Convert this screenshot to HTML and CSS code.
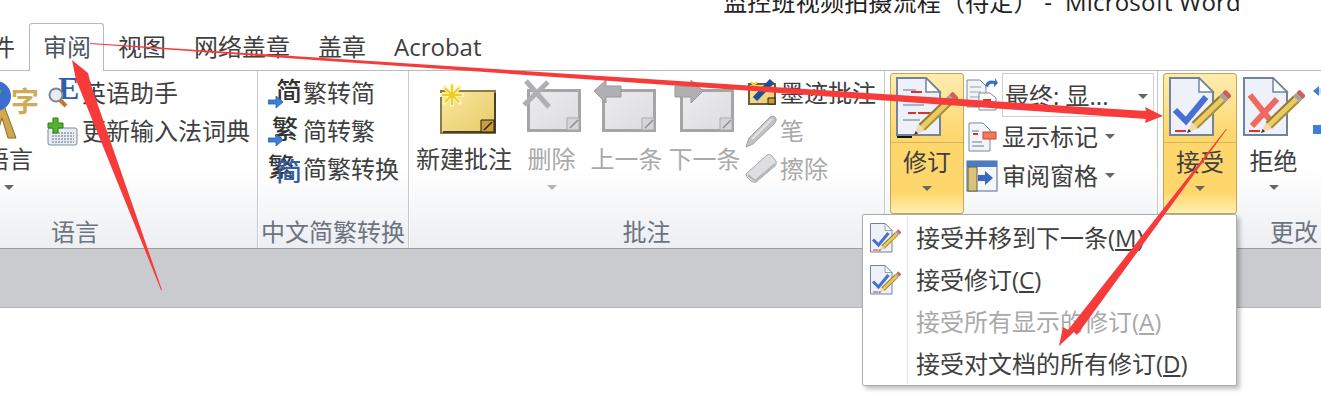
FILE: index.html
```html
<!DOCTYPE html>
<html lang="zh-CN">
<head>
  <meta charset="UTF-8">
  <title>Microsoft Word - 审阅</title>
  <link rel="stylesheet" href="styles.css">
</head>
<body>
  <!-- shared icons -->
  <svg class="defs" width="0" height="0">
    <defs>
      <linearGradient id="goldNote" x1="0" y1="0" x2="1" y2="1">
        <stop offset="0" stop-color="#f9e9a0"/>
        <stop offset="1" stop-color="#e8c968"/>
      </linearGradient>
      <linearGradient id="grayNote" x1="0" y1="0" x2="1" y2="1">
        <stop offset="0" stop-color="#ecebee"/>
        <stop offset="1" stop-color="#dcdbdf"/>
      </linearGradient>
      <g id="pencil">
        <polygon points="0,0 11,-4.5 11,4.5" fill="#f3d9b0"/>
        <polygon points="0,0 4,-1.7 4,1.7" fill="#333"/>
        <rect x="11" y="-4.5" width="38" height="9" fill="#e9cb62"/>
        <rect x="11" y="-4.5" width="38" height="2" fill="#8f7a3a"/>
        <rect x="11" y="2.5" width="38" height="2" fill="#a58c3e"/>
        <rect x="49" y="-4.5" width="4" height="9" fill="#9fa49c"/>
        <rect x="53" y="-4.5" width="5" height="9" rx="1.5" fill="#c8625c"/>
      </g>
      <g id="page">
        <path d="M1 1H30L44 15V58H1Z" fill="#eef1f9" stroke="#71849c" stroke-width="2"/>
        <path d="M30 1V15H44Z" fill="#fff" stroke="#71849c" stroke-width="1.5"/>
      </g>
      <g id="acceptDoc">
        <use href="#page"/>
        <path d="M6 33L17 44L37 20" fill="none" stroke="#476fd4" stroke-width="6"/>
        <rect x="6" y="53" width="11" height="2" fill="#d8342c"/>
        <use href="#pencil" transform="translate(18 56) rotate(-44)"/>
      </g>
      <g id="rejectDoc">
        <use href="#page"/>
        <path d="M7 18L31 48M34 22L9 49" fill="none" stroke="#ee6a5e" stroke-width="6"/>
        <rect x="6" y="53" width="11" height="2" fill="#d8342c"/>
        <use href="#pencil" transform="translate(18 56) rotate(-44)"/>
      </g>
      <g id="trackDoc">
        <use href="#page"/>
        <path d="M7 13H20M7 21H34M7 28H28M7 43H24" stroke="#a9b3c4" stroke-width="2"/>
        <path d="M15 15H26M22 36H40M12 36H20" stroke="#d8342c" stroke-width="2"/>
        <rect x="1" y="59" width="15" height="2" fill="#111"/>
        <use href="#pencil" transform="translate(18 58) rotate(-44)"/>
      </g>
      <g id="goldSheet">
        <rect x="1" y="1" width="54" height="42" fill="url(#goldNote)" stroke="#8a7a50" stroke-width="2"/>
        <path d="M3 42H55V3" fill="none" stroke="#4a3f28" stroke-width="2"/>
        <path d="M41 42V30H54V42Z" fill="#c99f35" stroke="#222" stroke-width="1"/>
        <path d="M44 40L52 32" stroke="#222" stroke-width="1.5"/>
      </g>
      <g id="graySheet">
        <rect x="1.5" y="1.5" width="51" height="40" fill="url(#grayNote)" stroke="#a5a5a7" stroke-width="3"/>
        <path d="M40 41V29H52V41Z" fill="#d5d5d7" stroke="#aaa" stroke-width="1"/>
        <path d="M43 39L51 31" stroke="#8b8b8b" stroke-width="1.5"/>
      </g>
      <g id="burst" stroke-width="2">
        <path d="M0 -12V12M-12 0H12M-9 -9L9 9M-9 9L9 -9" stroke="#fff3b0" stroke-width="4"/>
        <path d="M0 -10V10M-10 0H10M-7 -7L7 7M-7 7L7 -7" stroke="#f2cc28"/>
      </g>
      <g id="blueArrow">
        <path d="M0 4H8V0L15 6L8 12V8H0Z" fill="#3f7fd8" stroke="#2a5aa8" stroke-width="0.8"/>
      </g>
    </defs>
  </svg>

  <header class="titlebar">
    <span class="title-text">监控班视频拍摄流程（待定） -  Microsoft Word</span>
  </header>

  <nav class="tabs">
    <div class="tab tab-cut">文件</div>
    <div class="tab tab-active">审阅</div>
    <div class="tab">视图</div>
    <div class="tab">网络盖章</div>
    <div class="tab">盖章</div>
    <div class="tab">Acrobat</div>
  </nav>

  <section class="ribbon">
    <div class="group group-lang">
      <div class="group-body body-end">
        <div class="big-btn btn-lang">
          <svg class="big-icon" viewBox="0 0 66 66">
            <path d="M12 64L26 26L40 64H32L26 44L20 64Z" fill="#cfa850" stroke="#8a6b26"/>
            <circle cx="20" cy="22" r="15" fill="#3a6fd0"/>
            <path d="M12 13Q20 9 26 17Q22 27 14 27Z" fill="#4aa24a"/>
            <text x="35" y="38" class="icon-glyph glyph-gold">字</text>
          </svg>
          <span class="btn-text">语言</span>
          <span class="caret"></span>
        </div>
        <div class="small-list">
          <div class="small-row">
            <svg class="small-icon" viewBox="0 0 32 34">
              <text x="11" y="23" class="icon-glyph glyph-e">E</text>
              <circle cx="9" cy="19" r="6.5" fill="#e8ecf2" stroke="#7b8794" stroke-width="2"/>
              <path d="M13 24L19 30" stroke="#c9772c" stroke-width="4"/>
            </svg>
            <span>英语助手</span>
          </div>
          <div class="small-row">
            <svg class="small-icon" viewBox="0 0 32 34">
              <rect x="1" y="14" width="29" height="17" rx="2" fill="#e9edf3" stroke="#7d8ba0"/>
              <path d="M5 19H27M5 22H27M5 25H27M5 28H27" stroke="#8c9aae" stroke-width="1.5" stroke-dasharray="2 1"/>
              <path d="M6 4H11V9H16V14H11V19H6V14H1V9H6Z" fill="#55b32f" stroke="#2f7d18"/>
            </svg>
            <span>更新输入法词典</span>
          </div>
        </div>
      </div>
      <div class="group-label">语言</div>
    </div>

    <div class="group group-convert">
      <div class="group-body">
        <div class="small-list">
          <div class="small-row">
            <svg class="small-icon" viewBox="0 0 32 34">
              <text x="8" y="25" class="icon-glyph glyph-char">简</text>
              <use href="#blueArrow" transform="translate(0 20)"/>
            </svg>
            <span>繁转简</span>
          </div>
          <div class="small-row">
            <svg class="small-icon" viewBox="0 0 32 34">
              <text x="4" y="25" class="icon-glyph glyph-char">繁</text>
              <use href="#blueArrow" transform="translate(0 20)"/>
            </svg>
            <span>简转繁</span>
          </div>
          <div class="small-row">
            <svg class="small-icon" viewBox="0 0 32 34">
              <text x="0" y="25" class="icon-glyph glyph-char">繁</text>
              <text x="8" y="29" class="icon-glyph glyph-char glyph-blue">简</text>
            </svg>
            <span>简繁转换</span>
          </div>
        </div>
      </div>
      <div class="group-label">中文简繁转换</div>
    </div>

    <div class="group group-comment">
      <div class="group-body">
        <div class="big-btn btn-new">
          <svg class="big-icon" viewBox="0 0 66 66">
            <use href="#goldSheet" x="9" y="16"/>
            <use href="#burst" transform="translate(21 21)"/>
          </svg>
          <span class="btn-text">新建批注</span>
        </div>
        <div class="big-btn btn-delete is-off">
          <svg class="big-icon" viewBox="0 0 66 66">
            <use href="#graySheet" x="8" y="15"/>
            <path d="M7 7L30 33M29 8L5 31" fill="none" stroke="#b0b0b2" stroke-width="5"/>
          </svg>
          <span class="btn-text">删除</span>
          <span class="caret"></span>
        </div>
        <div class="big-btn btn-prev is-off">
          <svg class="big-icon" viewBox="0 0 66 66">
            <use href="#graySheet" x="8" y="15"/>
            <path d="M0 17L12 6V12H27V23H12V29Z" fill="#b0b0b2" stroke="#999"/>
          </svg>
          <span class="btn-text">上一条</span>
        </div>
        <div class="big-btn btn-next is-off">
          <svg class="big-icon" viewBox="0 0 66 66">
            <use href="#graySheet" x="8" y="15"/>
            <path d="M31 17L19 6V12H3V23H19V29Z" fill="#b0b0b2" stroke="#999"/>
          </svg>
          <span class="btn-text">下一条</span>
        </div>
        <div class="small-list list-ink">
          <div class="small-row">
            <svg class="small-icon" viewBox="0 0 32 34">
              <rect x="4" y="8" width="26" height="20" fill="url(#goldNote)" stroke="#6b5d3c" stroke-width="2"/>
              <path d="M23 28V22H30V28Z" fill="#c99f35" stroke="#222"/>
              <path d="M10 23L27 5" stroke="#1f4f96" stroke-width="6"/>
              <path d="M6 6L12 12M12 6L6 12" stroke="#f7d531" stroke-width="2"/>
            </svg>
            <span>墨迹批注</span>
          </div>
          <div class="small-row is-off">
            <svg class="small-icon" viewBox="0 0 32 34">
              <path d="M1 33L4 24L25 3Q29 1 31 4Q32 7 29 10L8 30Z" fill="#c2c2c4" stroke="#a3a3a5"/>
              <path d="M7 25L27 5" stroke="#e4e4e6" stroke-width="2"/>
            </svg>
            <span>笔</span>
          </div>
          <div class="small-row is-off">
            <svg class="small-icon" viewBox="0 0 32 34">
              <path d="M1 22L22 3Q24 1 27 4L31 9Q32 12 30 14L11 30Q8 31 6 29L2 25Z" fill="#dedee0" stroke="#a9a9ab"/>
              <path d="M3 23L10 29L30 12" fill="none" stroke="#b5b5b7" stroke-width="2"/>
            </svg>
            <span>擦除</span>
          </div>
        </div>
      </div>
      <div class="group-label">批注</div>
    </div>

    <div class="group group-track">
      <div class="group-body">
        <div class="split-btn">
          <div class="split-top">
            <svg class="split-icon" viewBox="0 0 62 62"><use href="#trackDoc"/></svg>
          </div>
          <div class="split-bottom">
            <span class="btn-text">修订</span>
            <span class="caret"></span>
          </div>
        </div>
        <div class="track-list">
          <div class="small-row row-select">
            <svg class="track-icon" viewBox="0 0 32 34">
              <path d="M1 3H14L20 9V30H1Z" fill="#f2f4f8" stroke="#7b8794"/>
              <path d="M4 10H15M4 15H15M4 20H15M4 25H15" stroke="#98a3b3"/>
              <path d="M13 16H24L30 21V33H13Z" fill="#fff" stroke="#7b8794"/>
              <path d="M17 23H25M17 27H25" stroke="#d8342c" stroke-width="2"/>
              <path d="M19 9Q21 2 29 4V1L32 6L28 10V7Q23 6 22 10Z" fill="#3d6fc0"/>
            </svg>
            <div class="select-box">
              <span>最终: 显...</span>
              <span class="caret"></span>
            </div>
          </div>
          <div class="small-row">
            <svg class="track-icon" viewBox="0 0 32 34">
              <path d="M3 3H17L24 10V31H3Z" fill="#f2f4f8" stroke="#7b8794"/>
              <path d="M6 11H13M6 22H16M6 26H18" stroke="#98a3b3" stroke-width="1.5"/>
              <path d="M7 14H12" stroke="#d8342c" stroke-width="2"/>
              <rect x="17" y="12" width="13" height="7" fill="#f0785c" stroke="#c9472e"/>
            </svg>
            <span>显示标记</span>
            <span class="caret"></span>
          </div>
          <div class="small-row">
            <svg class="track-icon" viewBox="0 0 32 34">
              <rect x="1" y="2" width="30" height="30" fill="#f4f6fa" stroke="#54678a"/>
              <rect x="1" y="2" width="30" height="6" fill="#4a7cc4"/>
              <rect x="2" y="8" width="9" height="24" fill="#d9c27a" stroke="#6b5d3c"/>
              <path d="M12 16H19V12L27 19L19 26V22H12Z" fill="#3469bf"/>
            </svg>
            <span>审阅窗格</span>
            <span class="caret"></span>
          </div>
        </div>
      </div>
      <div class="group-label">修订</div>
    </div>

    <div class="group group-change">
      <div class="group-body">
        <div class="split-btn">
          <div class="split-top">
            <svg class="split-icon" viewBox="0 0 62 62"><use href="#acceptDoc"/></svg>
          </div>
          <div class="split-bottom">
            <span class="btn-text">接受</span>
            <span class="caret"></span>
          </div>
        </div>
        <div class="split-plain">
          <div class="split-top">
            <svg class="split-icon" viewBox="0 0 62 62"><use href="#rejectDoc"/></svg>
          </div>
          <div class="split-bottom">
            <span class="btn-text">拒绝</span>
            <span class="caret"></span>
          </div>
        </div>
        <svg class="nav-icons" viewBox="0 0 12 60">
          <path d="M0 6L6 1V11Z" fill="#3f7fd8"/>
          <rect x="6" y="3" width="6" height="6" fill="#cfe0f5"/>
          <rect x="0" y="40" width="12" height="9" fill="#3f7fd8"/>
        </svg>
      </div>
      <div class="group-label">更改</div>
    </div>
  </section>

  <div class="statusband"></div>

  <!-- dropdown of the accept button -->
  <div class="menu">
    <div class="menu-item">
      <svg class="menu-icon" viewBox="0 0 62 62"><use href="#acceptDoc"/></svg>
      <span>接受并移到下一条(<u>M</u>)</span>
    </div>
    <div class="menu-item">
      <svg class="menu-icon" viewBox="0 0 62 62"><use href="#acceptDoc"/></svg>
      <span>接受修订(<u>C</u>)</span>
    </div>
    <div class="menu-item is-off">
      <span class="menu-icon"></span>
      <span>接受所有显示的修订(<u>A</u>)</span>
    </div>
    <div class="menu-item">
      <span class="menu-icon"></span>
      <span>接受对文档的所有修订(<u>D</u>)</span>
    </div>
  </div>

  <!-- red arrows drawn over the screenshot -->
  <svg class="marks" viewBox="0 0 1321 409">
    <polygon fill="#f73b3b" points="90,43 1146,111 1145,107 1163,116 1145,123 1146,119 90,44"/>
    <polygon fill="#f73b3b" points="162,290 91,85 88,73 72,60 76,80 79,87 161,290"/>
    <polygon fill="#f73b3b" points="1227,129 1077,335 1074,332 1059,346 1063,327 1068,330 1226,129"/>
  </svg>
</body>
</html>
```

FILE: styles.css
```css
* {
  box-sizing: border-box;
}
html, body {
  margin: 0;
  padding: 0;
}
body {
  position: relative;
  width: 1321px;
  height: 409px;
  overflow: hidden;
  background: #fff;
  color: #3f3f3f;
  font-family: "Open Sans", "Noto Sans CJK SC", sans-serif;
  font-size: 24px;
  line-height: 38px;
}
.defs {
  position: absolute;
}

.titlebar {
  height: 22px;
  overflow: hidden;
  display: flex;
  justify-content: flex-end;
  padding-right: 80px;
}
.title-text {
  margin-top: -17px;
  color: #222;
  white-space: pre;
  letter-spacing: 0.2px;
}

.tabs {
  display: flex;
  height: 48px;
}
.tab {
  padding: 6px 14px 0;
  flex-shrink: 0;
}
.tab-cut {
  margin-left: -47px;
}
.tab-active {
  margin: 1px 0 -1px;
  padding: 4px 12px 0 13px;
  height: 48px;
  background: #fff;
  border: 1px solid #b5b8bc;
  border-bottom: none;
  border-radius: 3px 3px 0 0;
  position: relative;
  z-index: 2;
  color: #4d5560;
}

.ribbon {
  display: flex;
  height: 179px;
  overflow: hidden;
  border-top: 1px solid #b9bcc0;
  border-bottom: 1px solid #9a9da1;
  background: linear-gradient(#fff 0%, #fff 55%, #eceef2 100%);
}
.group {
  display: flex;
  flex-direction: column;
  flex-shrink: 0;
  border-right: 1px solid #c6c8cc;
  box-shadow: 1px 0 0 #fff;
}
.group-lang {
  width: 365px;
  margin-left: -107px;
}
.group-convert {
  width: 151px;
}
.group-comment {
  width: 476px;
}
.group-track {
  width: 273px;
}
.group-change {
  width: 272px;
  border-right: none;
}
.group-body {
  flex: 1;
  display: flex;
  padding-top: 3px;
}
.body-end {
  justify-content: flex-end;
  padding-right: 7px;
}
.group-label {
  height: 30px;
  line-height: 30px;
  margin-bottom: 1px;
  text-align: center;
  color: #6c7480;
  white-space: nowrap;
}

.big-btn {
  display: flex;
  flex-direction: column;
  align-items: center;
  flex-shrink: 0;
}
.big-icon {
  width: 66px;
  height: 66px;
  flex-shrink: 0;
}
.btn-text {
  white-space: nowrap;
  line-height: 38px;
}
.caret {
  display: inline-block;
  width: 0;
  height: 0;
  border-left: 5px solid transparent;
  border-right: 5px solid transparent;
  border-top: 5px solid #666;
}
.btn-lang {
  width: 62px;
}
.btn-lang .caret {
  margin-top: 7px;
}
.btn-new {
  width: 104px;
  margin-left: 3px;
}
.btn-delete {
  width: 71px;
}
.btn-delete .caret {
  margin-top: 7px;
}
.btn-prev {
  width: 79px;
}
.btn-next {
  width: 77px;
}
.is-off {
  color: #a9a9a9;
}
.is-off .caret {
  border-top-color: #b5b5b5;
}

.small-list {
  display: flex;
  flex-direction: column;
}
.small-row {
  display: flex;
  align-items: center;
  height: 38px;
  white-space: nowrap;
}
.small-icon {
  width: 32px;
  height: 34px;
  margin-right: 3px;
  flex-shrink: 0;
}
.group-lang .small-list {
  margin-left: 7px;
}
.group-convert .small-list {
  padding-left: 10px;
}
.list-ink {
  margin-left: 2px;
}

.icon-glyph {
  font-family: "Noto Sans CJK SC", sans-serif;
  font-size: 24px;
}
.glyph-gold {
  font-size: 28px;
  font-weight: 700;
  fill: #d0ab55;
}
.glyph-e {
  font-family: "Liberation Serif", serif;
  font-size: 32px;
  font-weight: 700;
  fill: #2f5fa8;
}
.glyph-char {
  font-size: 26px;
  font-weight: 500;
  fill: #333;
}
.glyph-blue {
  fill: #2f5fa8;
}

/* highlighted split buttons */
.split-btn,
.split-plain {
  display: flex;
  flex-direction: column;
  width: 74px;
  height: 141px;
  margin-top: -1px;
  flex-shrink: 0;
}
.split-btn {
  margin-left: 5px;
  border: 1px solid #c9a64e;
  border-radius: 3px;
  background: linear-gradient(#fdecb0, #fdd76c 45%, #fdd76c 85%, #fff0b4);
}
.split-plain {
  margin-left: 1px;
  width: 71px;
}
.split-top {
  height: 69px;
  display: flex;
  justify-content: center;
  align-items: center;
  border-bottom: 1px solid #d6b45c;
}
.split-plain .split-top {
  border-bottom: none;
}
.split-icon {
  width: 62px;
  height: 62px;
}
.split-bottom {
  flex: 1;
  display: flex;
  flex-direction: column;
  align-items: center;
}
.split-bottom .caret {
  margin-top: 5px;
}
.nav-icons {
  width: 12px;
  height: 60px;
  margin: 11px 0 0 4px;
  flex-shrink: 0;
}

.track-list {
  display: flex;
  flex-direction: column;
  margin-left: 2px;
}
.track-icon {
  width: 32px;
  height: 34px;
  margin-right: 4px;
  flex-shrink: 0;
}
.track-list .small-row {
  height: 39px;
}
.track-list .small-row .caret {
  margin-left: 7px;
}
.track-list .row-select {
  height: 44px;
  margin-top: -1px;
  align-items: flex-start;
}
.row-select .track-icon {
  margin-top: 4px;
}
.select-box {
  width: 152px;
  height: 44px;
  padding: 2px 5px 0 2px;
  display: flex;
  justify-content: space-between;
  align-items: center;
  border: 1px solid #cfd1d5;
  background: #fff;
}

.statusband {
  height: 59px;
  background: #c9cbcf;
  border-bottom: 1px solid #b3b5b9;
}

/* dropdown over the ribbon */
.menu {
  position: absolute;
  left: 862px;
  top: 214px;
  width: 375px;
  height: 172px;
  padding: 2px 0;
  background: #fff;
  border: 1px solid #a9adb2;
  border-radius: 2px;
  box-shadow: 3px 3px 4px rgba(0, 0, 0, 0.25);
  z-index: 3;
}
.menu::before {
  content: "";
  position: absolute;
  left: 44px;
  top: 1px;
  bottom: 1px;
  width: 1px;
  background: #e2e3e6;
}
.menu-item {
  display: flex;
  align-items: center;
  height: 42px;
  white-space: nowrap;
}
.menu-icon {
  width: 31px;
  height: 31px;
  margin: 0 15px 0 7px;
  flex-shrink: 0;
}

.marks {
  position: absolute;
  left: 0;
  top: 0;
  width: 1321px;
  height: 409px;
  z-index: 4;
  pointer-events: none;
}
```
